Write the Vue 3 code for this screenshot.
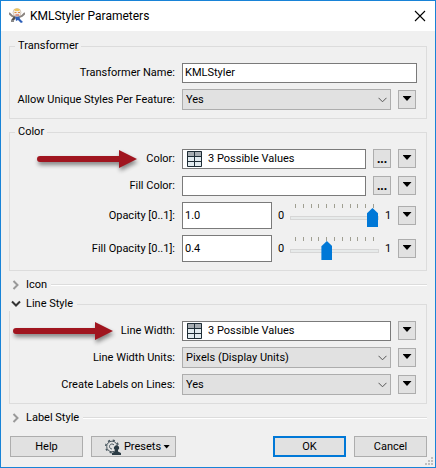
<script setup>
import { ref } from 'vue'

const name = ref('KMLStyler')
const unique = ref('Yes')
const color = ref('3 Possible Values')
const fill = ref('')
const opacity = ref('1.0')
const fillOpacity = ref('0.4')
const lineWidth = ref('3 Possible Values')
const units = ref('Pixels (Display Units)')
const createLabels = ref('Yes')
const sliders = [
  { id: 'opacity', label: 'Opacity [0..1]:', model: opacity },
  { id: 'fill-opacity', label: 'Fill Opacity [0..1]:', model: fillOpacity },
]
const ticks = Array.from({ length: 11 }, (_, i) => i)
</script>

<template>
  <form class="dialog" @submit.prevent>
    <header class="titlebar">
      <svg class="app-icon" viewBox="0 0 16 16" aria-hidden="true">
        <path d="M0 5l3 3 3 1M16 5l-3 3-3 1" fill="none" stroke="#8b8480" stroke-width="2" />
        <path d="M6 9l-3 4" stroke="#55504e" stroke-width="2.500" />
        <path d="M2 13h3" stroke="#8a8a8a" stroke-width="2" />
        <path d="M6 8h4l1 3 3 3-2 1-3-3-2 1z" fill="#2d5fb8" />
        <circle cx="8" cy="4.500" r="4" fill="#f1ece6" stroke="#c9b9a8" stroke-width=".7" />
        <path d="M5 1.500Q8-.5 11 1.500L10 3H6z" fill="#efc65a" />
        <path d="M5.500 4.500h2M9 4.500h2" stroke="#e08a3c" />
        <path d="M6.500 7h3.500" stroke="#c8483a" />
      </svg>
      <h1 class="title">KMLStyler Parameters</h1>
      <button class="close" type="button" aria-label="Close">
        <svg viewBox="0 0 12 12"><path d="M1 1l10 10M11 1L1 11" stroke="#000" stroke-width="1.1" /></svg>
      </button>
    </header>

    <main class="body">
      <fieldset class="group">
        <legend>Transformer</legend>
        <div class="row">
          <label for="name">Transformer Name:</label>
          <input id="name" v-model="name" class="field" type="text" />
        </div>
        <div class="row">
          <label for="unique">Allow Unique Styles Per Feature:</label>
          <div class="combo">
            <select id="unique" v-model="unique"><option>Yes</option><option>No</option></select>
            <svg class="chev" viewBox="0 0 9 6"><path d="M.5.8l4 4 4-4" /></svg>
          </div>
          <button class="mini" type="button" aria-label="Style options"><i class="tri"></i></button>
        </div>
      </fieldset>

      <fieldset class="group">
        <legend>Color</legend>
        <div class="row">
          <label for="color">Color:
            <svg class="arrow" viewBox="0 0 106 26" aria-hidden="true">
              <path d="M5 7H84V1L102 10L84 19V13H5A3 3 0 0 1 5 7Z" />
            </svg>
          </label>
          <div class="field with-icon">
            <svg class="table-icon" viewBox="0 0 15 16"><path fill="#e3ecf0" d="M0 0h15v16H0z" /><path fill="#a7adb2" d="M0 0h15v5H0z" /><path d="M.5.5h14v15H.5zM7.5 0v16M0 5.5h15M0 10.5h15" fill="none" stroke="#1f2d36" /></svg>
            <input id="color" v-model="color" type="text" />
          </div>
          <button class="mini dots" type="button" aria-label="Pick color">...</button>
          <button class="mini" type="button" aria-label="Color options"><i class="tri"></i></button>
        </div>
        <div class="row">
          <label for="fill">Fill Color:</label>
          <input id="fill" v-model="fill" class="field" type="text" />
          <button class="mini dots" type="button" aria-label="Pick fill color">...</button>
          <button class="mini" type="button" aria-label="Fill color options"><i class="tri"></i></button>
        </div>
        <div v-for="s in sliders" :key="s.id" class="row slider-row">
          <label :for="s.id">{{ s.label }}</label>
          <input :id="s.id" v-model="s.model.value" class="field" type="text" />
          <div class="slider">
            <span>0</span>
            <div class="track">
              <div class="ticks"><i v-for="t in ticks" :key="t"></i></div>
              <input v-model="s.model.value" type="range" min="0" max="1" step="0.1" :aria-label="s.label" />
            </div>
            <span>1</span>
          </div>
          <button class="mini" type="button" :aria-label="s.label + ' options'"><i class="tri"></i></button>
        </div>
      </fieldset>

      <section class="collapsed first">
        <button class="toggle" type="button"><svg viewBox="0 0 10 10"><path d="M2.500 1l4 4-4 4" /></svg>Icon</button>
        <span class="rule"></span>
      </section>

      <fieldset class="group line-style">
        <legend><button class="toggle open" type="button"><svg viewBox="0 0 10 10"><path d="M1 2.500l4 4 4-4" /></svg>Line Style</button></legend>
        <div class="row">
          <label for="line-width">Line Width:
            <svg class="arrow far" viewBox="0 0 106 26" aria-hidden="true">
              <path d="M5 7H84V1L102 10L84 19V13H5A3 3 0 0 1 5 7Z" />
            </svg>
          </label>
          <div class="field with-icon">
            <svg class="table-icon" viewBox="0 0 15 16"><path fill="#e3ecf0" d="M0 0h15v16H0z" /><path fill="#a7adb2" d="M0 0h15v5H0z" /><path d="M.5.5h14v15H.5zM7.5 0v16M0 5.5h15M0 10.5h15" fill="none" stroke="#1f2d36" /></svg>
            <input id="line-width" v-model="lineWidth" type="text" />
          </div>
          <button class="mini" type="button" aria-label="Line width options"><i class="tri"></i></button>
        </div>
        <div class="row">
          <label for="units">Line Width Units:</label>
          <div class="combo">
            <select id="units" v-model="units"><option>Pixels (Display Units)</option></select>
            <svg class="chev" viewBox="0 0 9 6"><path d="M.5.8l4 4 4-4" /></svg>
          </div>
          <button class="mini" type="button" aria-label="Unit options"><i class="tri"></i></button>
        </div>
        <div class="row">
          <label for="create">Create Labels on Lines:</label>
          <div class="combo">
            <select id="create" v-model="createLabels"><option>Yes</option><option>No</option></select>
            <svg class="chev" viewBox="0 0 9 6"><path d="M.5.8l4 4 4-4" /></svg>
          </div>
          <button class="mini" type="button" aria-label="Label options"><i class="tri"></i></button>
        </div>
      </fieldset>

      <section class="collapsed">
        <button class="toggle" type="button"><svg viewBox="0 0 10 10"><path d="M2.500 1l4 4-4 4" /></svg>Label Style</button>
        <span class="rule"></span>
      </section>
    </main>

    <footer class="footer">
      <button class="btn" type="button">Help</button>
      <button class="btn presets" type="button">
        <svg class="gear" viewBox="0 0 16 16" aria-hidden="true">
          <circle cx="7" cy="7.500" r="5.300" fill="none" stroke="#4a5860" />
          <circle cx="7" cy="7.500" r="6.300" fill="none" stroke="#4a5860" stroke-width="1.400" stroke-dasharray="2.200 2.750" />
          <path d="M9 6A2.500 2.500 0 1 0 7 10" fill="none" stroke="#4a5860" />
          <path d="M7 16v-2l3-1.500v-1.500a2.500 2.500 0 1 1 3 0v1.500l3 1.500v2z" fill="#2b3b44" />
        </svg>
        Presets<i class="tri"></i>
      </button>
      <span class="spacer"></span>
      <button class="btn ok" type="submit">OK</button>
      <button class="btn" type="button">Cancel</button>
    </footer>
    <svg class="grip" viewBox="0 0 8 8" aria-hidden="true">
      <path d="M6 0h2v2H6zM3 3h2v2H3zM6 3h2v2H6zM0 6h2v2H0zM3 6h2v2H3zM6 6h2v2H6z" fill="#bfbfbf" />
    </svg>
  </form>
</template>

<style>
body { background: #f0f0f0; }
</style>

<style scoped>
* { box-sizing: border-box; }
.dialog {
  position: relative;
  display: flex;
  flex-direction: column;
  min-height: 100vh;
  border: 1px solid #1883d7;
  background: #f0f0f0;
  color: #000;
  font: 11px/14px Roboto, "Noto Sans", sans-serif;
}
button, input, select { font: inherit; color: inherit; margin: 0; }
svg { flex: none; }
.titlebar { display: flex; align-items: center; height: 30px; padding: 0 9px 0 8px; background: #fff; }
.app-icon { width: 16px; height: 16px; }
.title { flex: 1; margin: 0 0 0 5px; font-size: 12px; line-height: 16px; font-weight: 400; }
.close { display: flex; padding: 0; border: 0; background: none; }
.close svg { width: 12px; height: 12px; }
.body { display: flex; flex-direction: column; padding: 8px 8px 0; }
.group {
  display: flex;
  flex-direction: column;
  gap: 6px;
  min-width: 0;
  margin: 0 0 6px;
  padding: 9px 9px 8px 0;
  border: 1px solid #dcdcdc;
}
.group legend { height: 14px; margin-left: 5px; padding: 0 3px; }
.row { display: flex; align-items: center; min-height: 21px; }
.row label { position: relative; width: 165px; flex: none; text-align: right; white-space: nowrap; }
.row > .field, .row > .combo { margin-left: 7px; }
.row > .mini { margin-left: 7px; }
.row > .mini:last-child { margin-right: 1px; }
.field {
  flex: 1;
  min-width: 0;
  height: 20px;
  padding: 0 2px;
  border: 1px solid #7a7a7a;
  border-radius: 0;
  background: #fff;
}
.with-icon { display: flex; align-items: center; padding: 0 4px; }
.with-icon input { flex: 1; min-width: 0; height: 16px; margin-left: 6px; padding: 0; border: 0; background: none; }
.table-icon { width: 15px; height: 16px; }
.combo { position: relative; display: flex; flex: 1; min-width: 0; }
.combo select {
  appearance: none;
  width: 100%;
  height: 21px;
  padding: 0 20px 0 3px;
  border: 1px solid #adadad;
  border-radius: 0;
  background: #e1e1e1;
}
.chev { position: absolute; right: 4px; top: 8px; width: 9px; height: 6px; fill: none; stroke: #555; pointer-events: none; }
.mini {
  display: flex;
  align-items: center;
  justify-content: center;
  flex: none;
  width: 18px;
  height: 19px;
  padding: 0 0 2px;
  border: 1px solid #adadad;
  background: #e1e1e1;
}
.dots { padding: 0; font: 700 12px/14px "Noto Sans", sans-serif; }
.tri { width: 9px; height: 5px; background: #000; clip-path: polygon(0 0, 100% 0, 50% 100%); }
.slider-row { min-height: 27px; }
.slider-row .field { height: 27px; }
.slider { display: flex; align-items: center; gap: 6px; margin-left: 6px; }
.slider span { width: 6px; }
.track { width: 89px; height: 27px; padding-top: 2px; }
.ticks { display: flex; justify-content: space-between; padding: 0 5px; }
.ticks i { width: 1px; height: 4px; background: #a09f92; }
.track input { display: block; appearance: none; width: 100%; height: 20px; background: none; }
.track input::-webkit-slider-runnable-track { height: 4px; border: 1px solid #d6d6d6; background: #e7eaea; }
.track input::-webkit-slider-thumb {
  appearance: none;
  width: 11px;
  height: 19px;
  margin-top: -9px;
  background: #0078d7;
  clip-path: polygon(50% 0, 100% 27%, 100% 100%, 0 100%, 0 27%);
}
.arrow { position: absolute; right: 34px; top: -3px; width: 106px; height: 26px; fill: #a0151f; filter: drop-shadow(1px 3px 2px rgba(0, 0, 0, 0.45)); }
.arrow.far { right: 58px; }
.collapsed { display: flex; align-items: center; gap: 4px; }
.collapsed.first { padding-top: 1px; }
.toggle { display: flex; align-items: center; gap: 5px; height: 14px; padding: 0 0 0 2px; border: 0; background: none; }
.toggle svg { width: 10px; height: 10px; fill: none; stroke: #999; stroke-width: 2; }
.toggle.open svg { stroke: #333; }
.rule { flex: 1; height: 2px; border-top: 1px solid #dcdcdc; background: #fff; }
.line-style { margin-top: 5px; margin-bottom: 7px; }
.group.line-style legend { margin-left: -1px; padding: 0 4px 0 0; background: #f0f0f0; }
.footer { display: flex; gap: 8px; padding: 11px 8px 8px 9px; }
.btn {
  display: flex;
  align-items: center;
  justify-content: center;
  width: 73px;
  height: 21px;
  padding: 0;
  border: 1px solid #adadad;
  background: #e1e1e1;
}
.presets { width: 85px; padding-left: 8px; }
.gear { width: 16px; height: 16px; margin-right: 3px; }
.presets .tri { margin-left: 2px; width: 7px; height: 4px; }
.ok { border: 2px solid #0078d7; }
.spacer { flex: 1; }
.grip { position: absolute; right: 2px; bottom: 2px; width: 8px; height: 8px; }
</style>
